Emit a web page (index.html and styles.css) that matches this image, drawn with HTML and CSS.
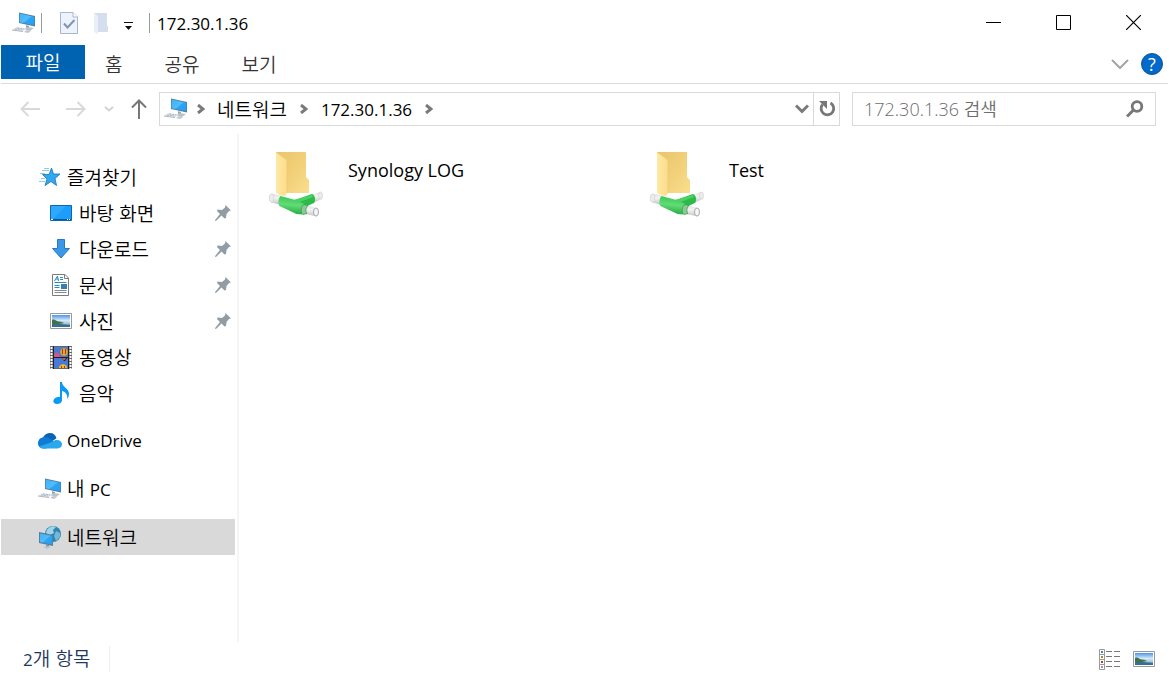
FILE: index.html
```html
<!doctype html>
<html lang="ko">
    <head>
        <meta charset="UTF-8" />
        <meta name="viewport" content="width=device-width, initial-scale=1.0" />
        <title>172.30.1.36</title>
        <link rel="stylesheet" href="styles.css">
    </head>
    <body>
        <!-- Shared icons -->
        <svg class="sprite" aria-hidden="true">
            <defs>
                <linearGradient id="screenFill" x1="0" y1="0" x2="1" y2="1">
                    <stop offset="0" stop-color="#3db4fb" />
                    <stop offset="0.5" stop-color="#52bcfb" />
                    <stop offset="0.55" stop-color="#2ba5f5" />
                    <stop offset="1" stop-color="#2a9df0" />
                </linearGradient>
                <linearGradient id="skyFill" x1="0" y1="0" x2="0" y2="1">
                    <stop offset="0" stop-color="#4f93e6" />
                    <stop offset="0.45" stop-color="#d5e9f8" />
                    <stop offset="0.7" stop-color="#a9cadb" />
                    <stop offset="1" stop-color="#2f6f9c" />
                </linearGradient>
                <linearGradient id="folderBack" x1="0" y1="0" x2="1" y2="1">
                    <stop offset="0" stop-color="#e9c568" />
                    <stop offset="0.6" stop-color="#f2d27c" />
                    <stop offset="1" stop-color="#fbdf8f" />
                </linearGradient>
                <linearGradient id="folderFront" x1="0" y1="0" x2="1" y2="0">
                    <stop offset="0" stop-color="#ffe9a6" />
                    <stop offset="1" stop-color="#fcdc8a" />
                </linearGradient>
                <linearGradient id="pipeFill" x1="0.4" y1="0" x2="0.25" y2="1">
                    <stop offset="0" stop-color="#35c653" />
                    <stop offset="0.45" stop-color="#62dc76" />
                    <stop offset="1" stop-color="#1fa43c" />
                </linearGradient>
                <linearGradient id="pipeEnd" x1="0" y1="0" x2="0" y2="1">
                    <stop offset="0" stop-color="#dcdcde" />
                    <stop offset="0.4" stop-color="#f4f4f5" />
                    <stop offset="1" stop-color="#c3c4c6" />
                </linearGradient>
            </defs>
            <symbol id="computer" viewBox="0 0 24 22">
                <path d="M14 13l3 1v3l-3-1z" fill="#9aa5ad" />
                <path d="M11 17l5-2 6 1-4 3z" fill="#b9c3ca" />
                <path d="M7 .5l16 3.500v10.500L7 11z" fill="#4f7e9f" />
                <path d="M7.700 1.500l14.600 3.200v8.600L7.700 10.300z" fill="url(#screenFill)" />
                <path d="M0 17.500l5-2.500 10 1.500-4 2.500z" fill="#dde2e7" />
                <path d="M0 17.500l11 1.500v1L0 18.500z" fill="#aab4be" />
                <path d="M3 17l7 1M5 16l7 1" stroke="#aeb8c2" stroke-dasharray="2 1" fill="none" />
                <path d="M12 20l3-2 4 1-3 2z" fill="#c0c7ce" />
            </symbol>
            <symbol id="pin" viewBox="0 0 16 16">
                <path d="M10.500 0L16 5.500l-2 .5-2.500 3-.5 4-1.500.500-3-3L1.500 15.500.5 16 0 15.500l.5-1L5 9 2 6l.5-1.500 4.500.500 3-2.500z" fill="#919ca4" />
            </symbol>
            <symbol id="picture" viewBox="0 0 22 16">
                <path d="M.5.5h21v15H.5z" fill="#fff" stroke="#999" />
                <path d="M2 2h18v12H2z" fill="url(#skyFill)" />
                <path d="M2 7c2-1 3 0 5 1s4 0 7 2l-5 1H2z" fill="#41704d" />
                <path d="M2 11h8l10 1v2H2z" fill="#386f91" />
            </symbol>
            <symbol id="crumbArrow" viewBox="0 0 9 10">
                <path d="M2 1L7 5L2 9" fill="none" stroke="#7a7a7a" stroke-width="3" />
            </symbol>
            <symbol id="sharedFolder" viewBox="0 0 56 67">
                <path d="M8 1h30v25l3 3v13H8z" fill="url(#folderBack)" />
                <path d="M8 1l11 8v33l-2 3-4-.5-5-2.500z" fill="url(#folderFront)" />
                <path d="M8 1l11 8v33" fill="none" stroke="#eac873" stroke-width=".7" />
                <path d="M45 43.500l7-2.500c2 1 3 4 2 7l-8 3.500z" fill="url(#pipeEnd)" />
                <ellipse cx="52.500" cy="44.500" rx="2" ry="3.500" fill="#ececed" stroke="#d2d2d4" stroke-width=".7" />
                <path d="M24 50l20-7c3 1 4 6 2 9L30 59z" fill="#2bbb49" />
                <path d="M26 49l18-5 1 2-16 6z" fill="#4dd165" />
                <path d="M3 42.500l10 2-2 9-8-2c-3-2-2-7 0-9z" fill="url(#pipeEnd)" />
                <ellipse cx="3.500" cy="47" rx="2.300" ry="4" fill="#ececed" stroke="#d6d6d8" stroke-width=".7" />
                <path d="M12.500 45c5 1 10 3 15 4l9 4-2 10.500-6-.5-17-8c-2-3-1-8 1-10z" fill="url(#pipeFill)" />
                <path d="M36 54l13 3v8.500l-14-3z" fill="url(#pipeEnd)" />
                <path d="M36 53.500c-3 1-4 8-1 10l4-1c-2-3-1-6 1-8z" fill="#8fc79b" stroke="#259b3c" stroke-width=".7" />
                <ellipse cx="48" cy="61" rx="2.500" ry="4" fill="#f6f6f6" stroke="#a9aaac" />
            </symbol>
        </svg>

        <div class="window">
            <header class="titlebar">
                <svg class="app-icon" width="24" height="22"><use href="#computer" /></svg>
                <span class="separator"></span>
                <button class="quick-button" aria-label="속성">
                    <svg width="18" height="22" viewBox="0 0 18 22">
                        <path d="M.5.5H13L17.500 5v16.500H.5z" fill="#eef3fb" stroke="#a9b6cb" />
                        <path d="M13 .5V5h4.500" fill="#fff" stroke="#a9b6cb" />
                        <path d="M4 11.500l3.500 4 7-7.500" fill="none" stroke="#8294b1" stroke-width="2" />
                    </svg>
                </button>
                <button class="quick-button" aria-label="새 폴더">
                    <svg width="16" height="22" viewBox="0 0 16 22">
                        <path d="M1 1h13v12l1 2v5H1z" fill="#d5deec" />
                        <path d="M1 1l4 3v17l-1 1-3-2z" fill="#e9eff8" />
                    </svg>
                </button>
                <button class="quick-button quick-menu" aria-label="빠른 실행 도구 모음 사용자 지정">
                    <svg width="9" height="8" viewBox="0 0 9 8">
                        <path d="M0 0h9v1H0zM1 4h7L4.500 8z" fill="#111" />
                    </svg>
                </button>
                <span class="separator"></span>
                <span class="title">172.30.1.36</span>
                <div class="window-buttons">
                    <button aria-label="최소화">
                        <svg width="15" height="15" viewBox="0 0 15 15"><path d="M0 7.500h15" stroke="#000" /></svg>
                    </button>
                    <button aria-label="최대화">
                        <svg width="15" height="15" viewBox="0 0 15 15"><path d="M.5.5h14v14H.5z" fill="none" stroke="#000" /></svg>
                    </button>
                    <button aria-label="닫기">
                        <svg width="15" height="15" viewBox="0 0 15 15"><path d="M0 0l15 15M15 0L0 15" stroke="#000" stroke-width="1.200" /></svg>
                    </button>
                </div>
            </header>

            <nav class="ribbon">
                <button class="tab file-tab">파일</button>
                <button class="tab">홈</button>
                <button class="tab">공유</button>
                <button class="tab">보기</button>
                <div class="ribbon-tools">
                    <button aria-label="리본 확장">
                        <svg width="18" height="10" viewBox="0 0 18 10"><path d="M1 1l8 8 8-8" fill="none" stroke="#a3a3a3" stroke-width="2" /></svg>
                    </button>
                    <button class="help" aria-label="도움말">?</button>
                </div>
            </nav>

            <div class="navbar">
                <button class="nav-button" aria-label="뒤로">
                    <svg width="20" height="16" viewBox="0 0 20 16"><path d="M20 8H2M8.500 1L1.500 8l7 7" fill="none" stroke="#d9d9d9" stroke-width="2" /></svg>
                </button>
                <button class="nav-button" aria-label="앞으로">
                    <svg width="20" height="16" viewBox="0 0 20 16"><path d="M0 8h18M11.500 1l7 7-7 7" fill="none" stroke="#d9d9d9" stroke-width="2" /></svg>
                </button>
                <button class="nav-button history" aria-label="최근 위치">
                    <svg width="10" height="6" viewBox="0 0 10 6"><path d="M1 1l4 3.500L9 1" fill="none" stroke="#d3d3d3" stroke-width="2" /></svg>
                </button>
                <button class="nav-button up" aria-label="위로">
                    <svg width="16" height="20" viewBox="0 0 16 20"><path d="M8 20V2M1 8.500l7-7 7 7" fill="none" stroke="#777" stroke-width="2" /></svg>
                </button>

                <div class="address">
                    <svg width="24" height="22"><use href="#computer" /></svg>
                    <svg class="crumb-arrow" width="9" height="10"><use href="#crumbArrow" /></svg>
                    <button class="crumb">네트워크</button>
                    <svg class="crumb-arrow" width="9" height="10"><use href="#crumbArrow" /></svg>
                    <button class="crumb latin">172.30.1.36</button>
                    <svg class="crumb-arrow" width="9" height="10"><use href="#crumbArrow" /></svg>
                    <button class="address-menu" aria-label="이전 위치">
                        <svg width="14" height="10" viewBox="0 0 14 10"><path d="M1 1.500l6 6 6-6" fill="none" stroke="#7a7a7a" stroke-width="3" /></svg>
                    </button>
                    <button class="refresh" aria-label="새로 고침">
                        <svg width="18" height="18" viewBox="0 0 18 18">
                            <path d="M12.500 3A6.300 6.300 0 1 1 4.500 4.500" fill="none" stroke="#777" stroke-width="2.800" />
                            <path d="M1 1h8v8z" fill="#777" />
                        </svg>
                    </button>
                </div>

                <label class="search">
                    <input type="text" placeholder="172.30.1.36 검색" aria-label="172.30.1.36 검색" />
                    <svg width="18" height="18" viewBox="0 0 18 18">
                        <circle cx="11" cy="6.500" r="4.800" fill="none" stroke="#777" stroke-width="2.800" />
                        <path d="M7.500 10L1 16.500" stroke="#777" stroke-width="3" />
                    </svg>
                </label>
            </div>

            <div class="main">
                <aside class="sidebar">
                    <section class="group">
                        <a class="item" href="#">
                            <svg width="24" height="20" viewBox="0 0 24 20">
                                <path d="M13.500 1l2 6H22l-5 4.500 1.500 7-5.500-4-6 4L9 12 4.500 7.500H11z" fill="#31a8ef" stroke="#1674b5" stroke-width=".8" />
                                <path d="M4 3.500h7M6 1.500h5M2 6.500h5M3 11.500h4M1 14.500h6" stroke="#75bce8" stroke-width=".8" />
                            </svg>
                            <span>즐겨찾기</span>
                        </a>
                        <a class="item child" href="#">
                            <svg width="22" height="16" viewBox="0 0 22 16">
                                <path d="M.5.5h21v15H.5z" fill="#1b9dfc" stroke="#0c67b0" />
                                <path d="M1 1h15L3 14H1z" fill="#2fa9fe" />
                                <path d="M1 14.500h20" stroke="#075895" />
                                <path d="M1 14h2v1H1zM17 14h1v1h-1zM19 14h1v1h-1z" fill="#fff" />
                            </svg>
                            <span>바탕 화면</span>
                            <svg class="pin" width="16" height="16"><use href="#pin" /></svg>
                        </a>
                        <a class="item child" href="#">
                            <svg width="22" height="20" viewBox="0 0 22 20">
                                <path d="M7.500.5h7v9H19.500L11 19 2.500 9.500h5z" fill="#3b97e8" stroke="#2678c4" />
                            </svg>
                            <span>다운로드</span>
                            <svg class="pin" width="16" height="16"><use href="#pin" /></svg>
                        </a>
                        <a class="item child" href="#">
                            <svg width="22" height="22" viewBox="0 0 22 22">
                                <path d="M2.500.5H15L18.500 4v17.500h-16z" fill="#fff" stroke="#7b7b7b" />
                                <path d="M14.500.5v4h4" fill="none" stroke="#7b7b7b" />
                                <path d="M4.500 7l3-5 1 5M6 5h2.500M10 3.500h3M10 5.500h3M4.500 8.500h12M4.500 11.500h5M4.500 13.500h5" fill="none" stroke="#268cc5" />
                                <path d="M11 10h6v5h-6z" fill="#3a7da9" />
                                <path d="M4.500 16.500h12M4.500 18.500h12" stroke="#8a8a8a" />
                            </svg>
                            <span>문서</span>
                            <svg class="pin" width="16" height="16"><use href="#pin" /></svg>
                        </a>
                        <a class="item child" href="#">
                            <svg width="22" height="16"><use href="#picture" /></svg>
                            <span>사진</span>
                            <svg class="pin" width="16" height="16"><use href="#pin" /></svg>
                        </a>
                        <a class="item child" href="#">
                            <svg width="22" height="23" viewBox="0 0 22 23">
                                <path d="M0 0h22v23H0z" fill="#666" />
                                <path d="M1.500 1v22M20.500 1v22" stroke="#fff" stroke-width="2" stroke-dasharray="2 1" />
                                <path d="M4 1h14v10H4zM4 12h14v10H4z" fill="#4779d8" />
                                <path d="M4 9l2-3 3 2 2 3H4z" fill="#d75682" />
                                <circle cx="14" cy="6" r="3.800" fill="#e8a522" />
                                <path d="M12 3h1v5h-1zM15 3h1v5h-1z" fill="#a8382b" />
                                <path d="M11 11h7l-3 4h-1z" fill="#222" />
                                <path d="M12 12h4l-1 2h-2z" fill="#cd5630" />
                                <path d="M9 22c0-5 8-5 8 0z" fill="#f2bd22" />
                                <path d="M11 20h1v2h-1zM14 20h1v2h-1z" fill="#bc3522" />
                                <path d="M3.500 0v23M18.500 0v23M4 11.500h14" stroke="#202020" />
                            </svg>
                            <span>동영상</span>
                        </a>
                        <a class="item child" href="#">
                            <svg width="22" height="22" viewBox="0 0 22 22">
                                <path d="M10 0h2c0 5 7 6 7 12 0 2-1 4-2 5 1-4-1-7-5-8v9c0 3-3 4-5 4-5 0-5-6 1-7l2 0z" fill="#0a9af5" />
                            </svg>
                            <span>음악</span>
                        </a>
                    </section>
                    <a class="item" href="#">
                        <svg width="24" height="18" viewBox="0 0 26 18">
                            <path d="M5 6c3-7 13-8 15 0l-7 5z" fill="#0c63b6" />
                            <path d="M6 17C-2 17-2 6 6 5c3-1 5 0 8 2l4 3-9 7z" fill="#107bd6" />
                            <path d="M13 11l6-3c9-1 9 9 2 9H5c-2 0-3-1-4-2z" fill="#29a8ec" />
                        </svg>
                        <span class="latin">OneDrive</span>
                    </a>
                    <a class="item" href="#">
                        <svg width="24" height="22"><use href="#computer" /></svg>
                        <span>내 <span class="latin">PC</span></span>
                    </a>
                    <a class="item selected" href="#">
                        <svg width="24" height="24" viewBox="0 0 24 24">
                            <circle cx="15" cy="9" r="8" fill="#2c86b2" />
                            <path d="M8 7c2-5 6-7 10-5l-3 3 1 3-4 2-2 3z" fill="#a2d3e6" />
                            <path d="M18 6l4 2c1 3-1 6-4 8l-2-5z" fill="#75b8d5" />
                            <path d="M8 20h3v2H8z" fill="#7e93a2" />
                            <path d="M5 22l5-1 3 1-4 2z" fill="#b8c5cd" />
                            <path d="M1 7l14 3v11L1 18z" fill="#557f9a" />
                            <path d="M2 8.500l12 2.500v8.500L2 17z" fill="url(#screenFill)" />
                        </svg>
                        <span>네트워크</span>
                    </a>
                </aside>

                <main class="files">
                    <a class="tile" href="#">
                        <svg width="56" height="67"><use href="#sharedFolder" /></svg>
                        <span>Synology LOG</span>
                    </a>
                    <a class="tile" href="#">
                        <svg width="56" height="67"><use href="#sharedFolder" /></svg>
                        <span>Test</span>
                    </a>
                </main>
            </div>

            <footer class="statusbar">
                <span class="count"><span class="latin">2</span>개 항목</span>
                <div class="view-buttons">
                    <button aria-label="자세히">
                        <svg width="22" height="21" viewBox="0 0 22 21">
                            <path d="M.5.5h5v5h-5zM.5 5.500h5v5h-5zM.5 10.500h5v5h-5zM.5 15.500h5v5h-5z" fill="#fff" stroke="#999" />
                            <path d="M2 2h2v2H2z" fill="#4385a5" />
                            <path d="M2 7h2v2H2z" fill="#a48b2c" />
                            <path d="M2 12h2v2H2z" fill="#bc3925" />
                            <path d="M2 17h2v2H2z" fill="#9b8eb9" />
                            <path d="M7 2.500h6M15 2.500h6M7 7.500h6M15 7.500h6M7 12.500h6M15 12.500h6M7 17.500h6M15 17.500h6" stroke="#777" />
                        </svg>
                    </button>
                    <button aria-label="큰 아이콘">
                        <svg width="22" height="16"><use href="#picture" /></svg>
                    </button>
                </div>
            </footer>
        </div>
    </body>
</html>
```
FILE: styles.css
```css
* {
    box-sizing: border-box;
}

body {
    margin: 0;
    background-color: #fff;
    font-family: "Noto Sans CJK KR", sans-serif;
    font-size: 19px;
    font-weight: 350;
    line-height: 24px;
    color: #000;
}

button {
    display: flex;
    align-items: center;
    justify-content: center;
    padding: 0;
    border: none;
    background: none;
    font: inherit;
    color: inherit;
}

a {
    color: inherit;
    text-decoration: none;
}

svg {
    flex: none;
}

.sprite {
    position: absolute;
    width: 0;
    height: 0;
}

.latin,
.title,
.tile {
    font-family: "Open Sans", "Noto Sans", sans-serif;
    font-size: 17px;
    font-weight: 400;
}

.window {
    display: flex;
    flex-direction: column;
    min-height: 100vh;
    padding: 0 1px;
}

/* Title bar */
.titlebar {
    display: flex;
    align-items: center;
    height: 45px;
    padding-left: 11px;
}

.separator {
    width: 1px;
    height: 20px;
    margin-left: 5px;
    background-color: #999;
}

.quick-button {
    width: 32px;
    height: 32px;
}

.separator + .quick-button {
    margin-left: 11px;
}

.quick-menu {
    width: 22px;
    margin-right: 5px;
    padding-top: 6px;
}

.title {
    margin-left: 7px;
    padding-top: 2px;
}

.window-buttons {
    display: flex;
    margin-left: auto;
}

.window-buttons button {
    width: 70px;
    height: 45px;
}

/* Ribbon tabs */
.ribbon {
    display: flex;
    height: 39px;
    border-bottom: 1px solid #dadbdc;
}

.tab {
    height: 38px;
    margin-right: 2px;
    padding: 0 20px;
    color: #333;
}

.file-tab {
    width: 84px;
    height: 34px;
    margin-right: 0;
    background-color: #0063b1;
    color: #fff;
}

.ribbon-tools {
    display: flex;
    align-items: center;
    gap: 12px;
    margin-left: auto;
    padding-right: 5px;
}

.help {
    width: 22px;
    height: 22px;
    border: 1px solid #07549b;
    border-radius: 50%;
    background-color: #0069ca;
    color: #fff;
    font-family: "Open Sans", sans-serif;
    font-size: 18px;
    font-weight: 400;
    line-height: 20px;
}

/* Address row */
.navbar {
    display: flex;
    align-items: center;
    padding: 8px 12px 8px 6px;
}

.nav-button {
    width: 46px;
    height: 34px;
}

.history {
    width: 20px;
}

.up {
    width: 40px;
}

.address {
    display: flex;
    flex: 1;
    align-items: center;
    height: 34px;
    padding-left: 4px;
    border: 1px solid #d9d9d9;
}

.crumb-arrow {
    margin: 0 8px;
}

.crumb {
    padding: 0 4px;
}

.crumb.latin {
    padding: 2px 4px 0 5px;
}

.address-menu {
    width: 22px;
    height: 32px;
    margin-left: auto;
}

.refresh {
    width: 26px;
    height: 32px;
    border-left: 1px solid #d9d9d9;
}

.search {
    display: flex;
    align-items: center;
    width: 304px;
    height: 34px;
    margin-left: 12px;
    padding: 0 11px;
    border: 1px solid #d9d9d9;
}

.search input {
    flex: 1;
    min-width: 0;
    padding: 0;
    border: none;
    outline: none;
    font-family: "Open Sans", "Noto Sans CJK KR", sans-serif;
    font-size: 18px;
    font-weight: 350;
}

.search input::placeholder {
    color: #6d6d6d;
    opacity: 1;
}

/* Navigation pane */
.main {
    display: flex;
    flex: 1;
}

.sidebar {
    display: flex;
    flex-direction: column;
    gap: 12px;
    width: 238px;
    padding: 25px 2px 0 0;
    border-right: 2px solid #f5f5f5;
}

.item {
    display: flex;
    align-items: center;
    gap: 5px;
    height: 36px;
    padding-left: 37px;
}

.item svg:first-child {
    width: 24px;
}

.child {
    padding-left: 49px;
    gap: 7px;
}

.child svg:first-child {
    width: 22px;
}

.pin {
    margin-left: auto;
    margin-right: 4px;
}

.selected {
    background-color: #d9d9d9;
}

/* Shared folders */
.files {
    display: grid;
    flex: 1;
    grid-template-columns: repeat(auto-fill, 381px);
    align-content: start;
    padding: 17px 0 0 29px;
}

.tile {
    display: flex;
    gap: 24px;
    font-size: 18px;
}

.tile span {
    padding-top: 7px;
}

/* Status bar */
.statusbar {
    display: flex;
    align-items: center;
    justify-content: space-between;
    height: 36px;
    padding: 0 13px 2px 22px;
    color: #1e395b;
}

.count {
    padding-right: 18px;
    border-right: 1px solid #ededed;
}

.view-buttons {
    display: flex;
    gap: 12px;
}
```
